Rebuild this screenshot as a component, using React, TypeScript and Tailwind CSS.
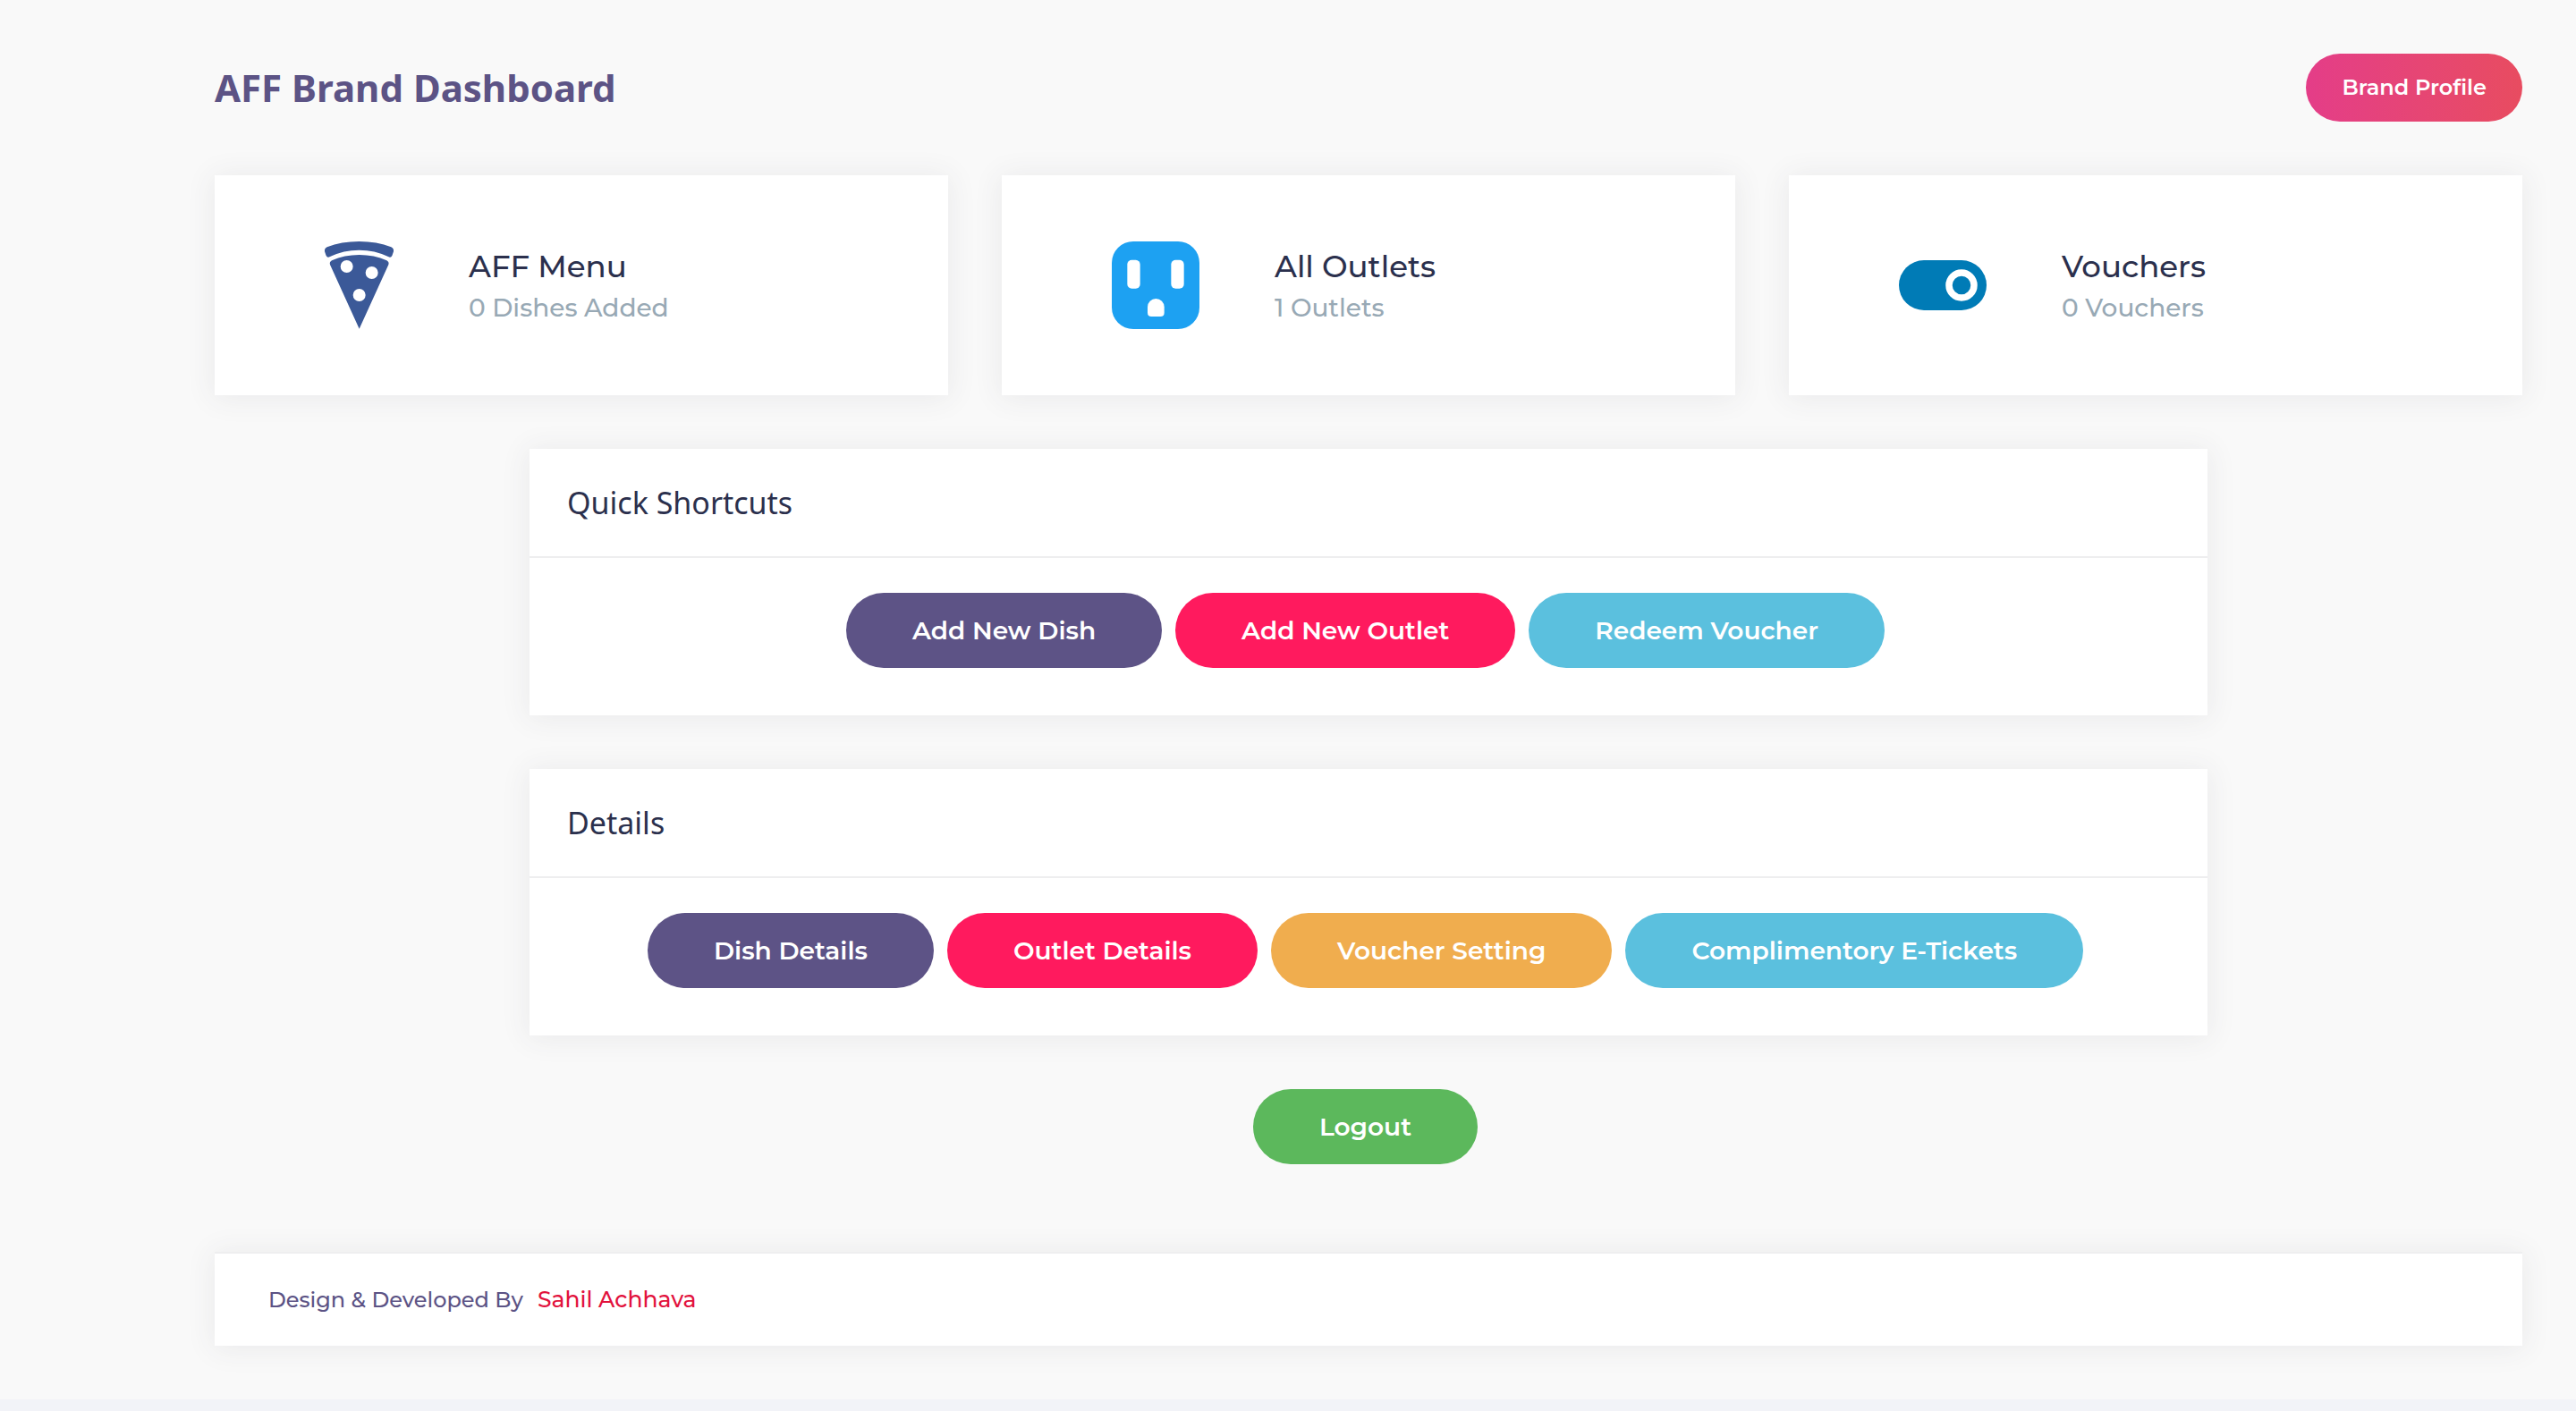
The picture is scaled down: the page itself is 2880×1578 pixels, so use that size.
import React from 'react';

const SHADOW = 'bg-white shadow-[0_2px_30px_2px_rgba(69,65,78,0.08)]';

function PizzaIcon() {
  return (
    <svg viewBox="0 0 231 294" className="h-[98px] w-[77px] shrink-0 fill-[#3b5998]" aria-hidden="true">
      <path d="M8 19 Q56 0 115.500 0 Q175 0 223 19 Q233 24 231 34 L226 48 Q222 56 213 51 Q168 29 115.500 29 Q63 29 18 51 Q9 56 5 48 L0 34 Q-2 24 8 19Z" />
      <path
        fillRule="evenodd"
        d="M24 64 Q66 45 116 45 Q166 45 208 64 Q217 69 214 78 L116 293 L18 78 Q15 69 24 64Z M74 63a21 21 0 1 0 0 42a21 21 0 1 0 0-42Z M158 84a21 21 0 1 0 0 42a21 21 0 1 0 0-42Z M116 159a21 21 0 1 0 0 42a21 21 0 1 0 0-42Z"
      />
    </svg>
  );
}

function OutletIcon() {
  return (
    <svg viewBox="0 0 294 294" className="size-[98px] shrink-0" aria-hidden="true">
      <rect width="294" height="294" rx="72" className="fill-[#1da1f2]" />
      <rect x="52" y="62" width="43" height="96" rx="15" fill="#fff" />
      <rect x="199" y="62" width="43" height="96" rx="15" fill="#fff" />
      <path d="M120 220a28 28 0 0 1 56 0v19q0 13-13 13h-30q-13 0-13-13Z" fill="#fff" />
    </svg>
  );
}

function ToggleIcon() {
  return (
    <svg viewBox="0 0 98 98" className="size-[98px] shrink-0" aria-hidden="true">
      <rect y="21" width="98" height="56" rx="28" className="fill-[#007bb6]" />
      <circle cx="70" cy="49" r="14" fill="none" stroke="#fff" strokeWidth="7.500" />
    </svg>
  );
}

const stats = [
  { icon: <PizzaIcon />, name: 'AFF Menu', detail: '0 Dishes Added' },
  { icon: <OutletIcon />, name: 'All Outlets', detail: '1 Outlets' },
  { icon: <ToggleIcon />, name: 'Vouchers', detail: '0 Vouchers' },
];

function Pill({ color, children }: { color: string; children: React.ReactNode }) {
  return (
    <button type="button" className={`h-[84px] rounded-full px-[74px] text-[28px] font-semibold text-white ${color}`}>
      {children}
    </button>
  );
}

function Panel({ title, children }: { title: string; children: React.ReactNode }) {
  return (
    <section className={`mx-auto mt-[60px] w-full max-w-[1876px] ${SHADOW}`}>
      <h2 className="border-b-2 border-[#eeeeef] px-[42px] py-9 font-['Noto_Sans',sans-serif] text-[34px] leading-[48px] text-[#2b304d]">
        {title}
      </h2>
      <div className="flex flex-wrap justify-center gap-[15px] pt-[39px] pr-[7px] pb-[53px]">{children}</div>
    </section>
  );
}

export default function App() {
  return (
    <div className="min-h-screen bg-[#f2f3f8] font-['Montserrat','Inter',sans-serif]">
      <div className="bg-[#f9f9f9] py-[60px] pr-[60px] pl-[240px]">
        <header className="flex items-center justify-between">
          <h1 className="font-['Noto_Sans',sans-serif] text-[42px] leading-[60px] font-bold text-[#5c5385]">
            AFF Brand Dashboard
          </h1>
          <button
            type="button"
            className="h-[76px] rounded-full bg-linear-to-r from-[#e43d88] to-[#e84c60] px-10 text-2xl font-semibold text-white"
          >
            Brand Profile
          </button>
        </header>

        <main>
          <div className="mt-[60px] grid grid-cols-3 gap-[60px]">
            {stats.map((s) => (
              <article key={s.name} className={`flex h-[246px] items-center gap-[84px] pl-[123px] ${SHADOW}`}>
                {s.icon}
                <div>
                  <h3 className="text-[34px] leading-[50px] font-medium text-[#2b304d]">{s.name}</h3>
                  <p className="text-[28px] leading-[42px] font-medium text-[#98a9b5]">{s.detail}</p>
                </div>
              </article>
            ))}
          </div>

          <Panel title="Quick Shortcuts">
            <Pill color="bg-[#5d5386]">Add New Dish</Pill>
            <Pill color="bg-[#ff1a5e]">Add New Outlet</Pill>
            <Pill color="bg-[#5bc0de]">Redeem Voucher</Pill>
          </Panel>

          <Panel title="Details">
            <Pill color="bg-[#5d5386]">Dish Details</Pill>
            <Pill color="bg-[#ff1a5e]">Outlet Details</Pill>
            <Pill color="bg-[#f0ad4e]">Voucher Setting</Pill>
            <Pill color="bg-[#5bc0de]">Complimentory E-Tickets</Pill>
          </Panel>

          <div className="flex justify-center pt-[60px] pr-[7px]">
            <Pill color="bg-[#5cb85c]">Logout</Pill>
          </div>
        </main>

        <footer className={`mt-[98px] flex items-baseline gap-4 border-t-2 border-[#eeeeef] px-[60px] py-[31px] ${SHADOW}`}>
          <span className="text-2xl leading-[40px] font-medium text-[#5c5385]">Design &amp; Developed By</span>
          <a href="#" className="text-[25px] leading-[40px] font-medium text-[#e2123d]">
            Sahil Achhava
          </a>
        </footer>
      </div>
    </div>
  );
}
